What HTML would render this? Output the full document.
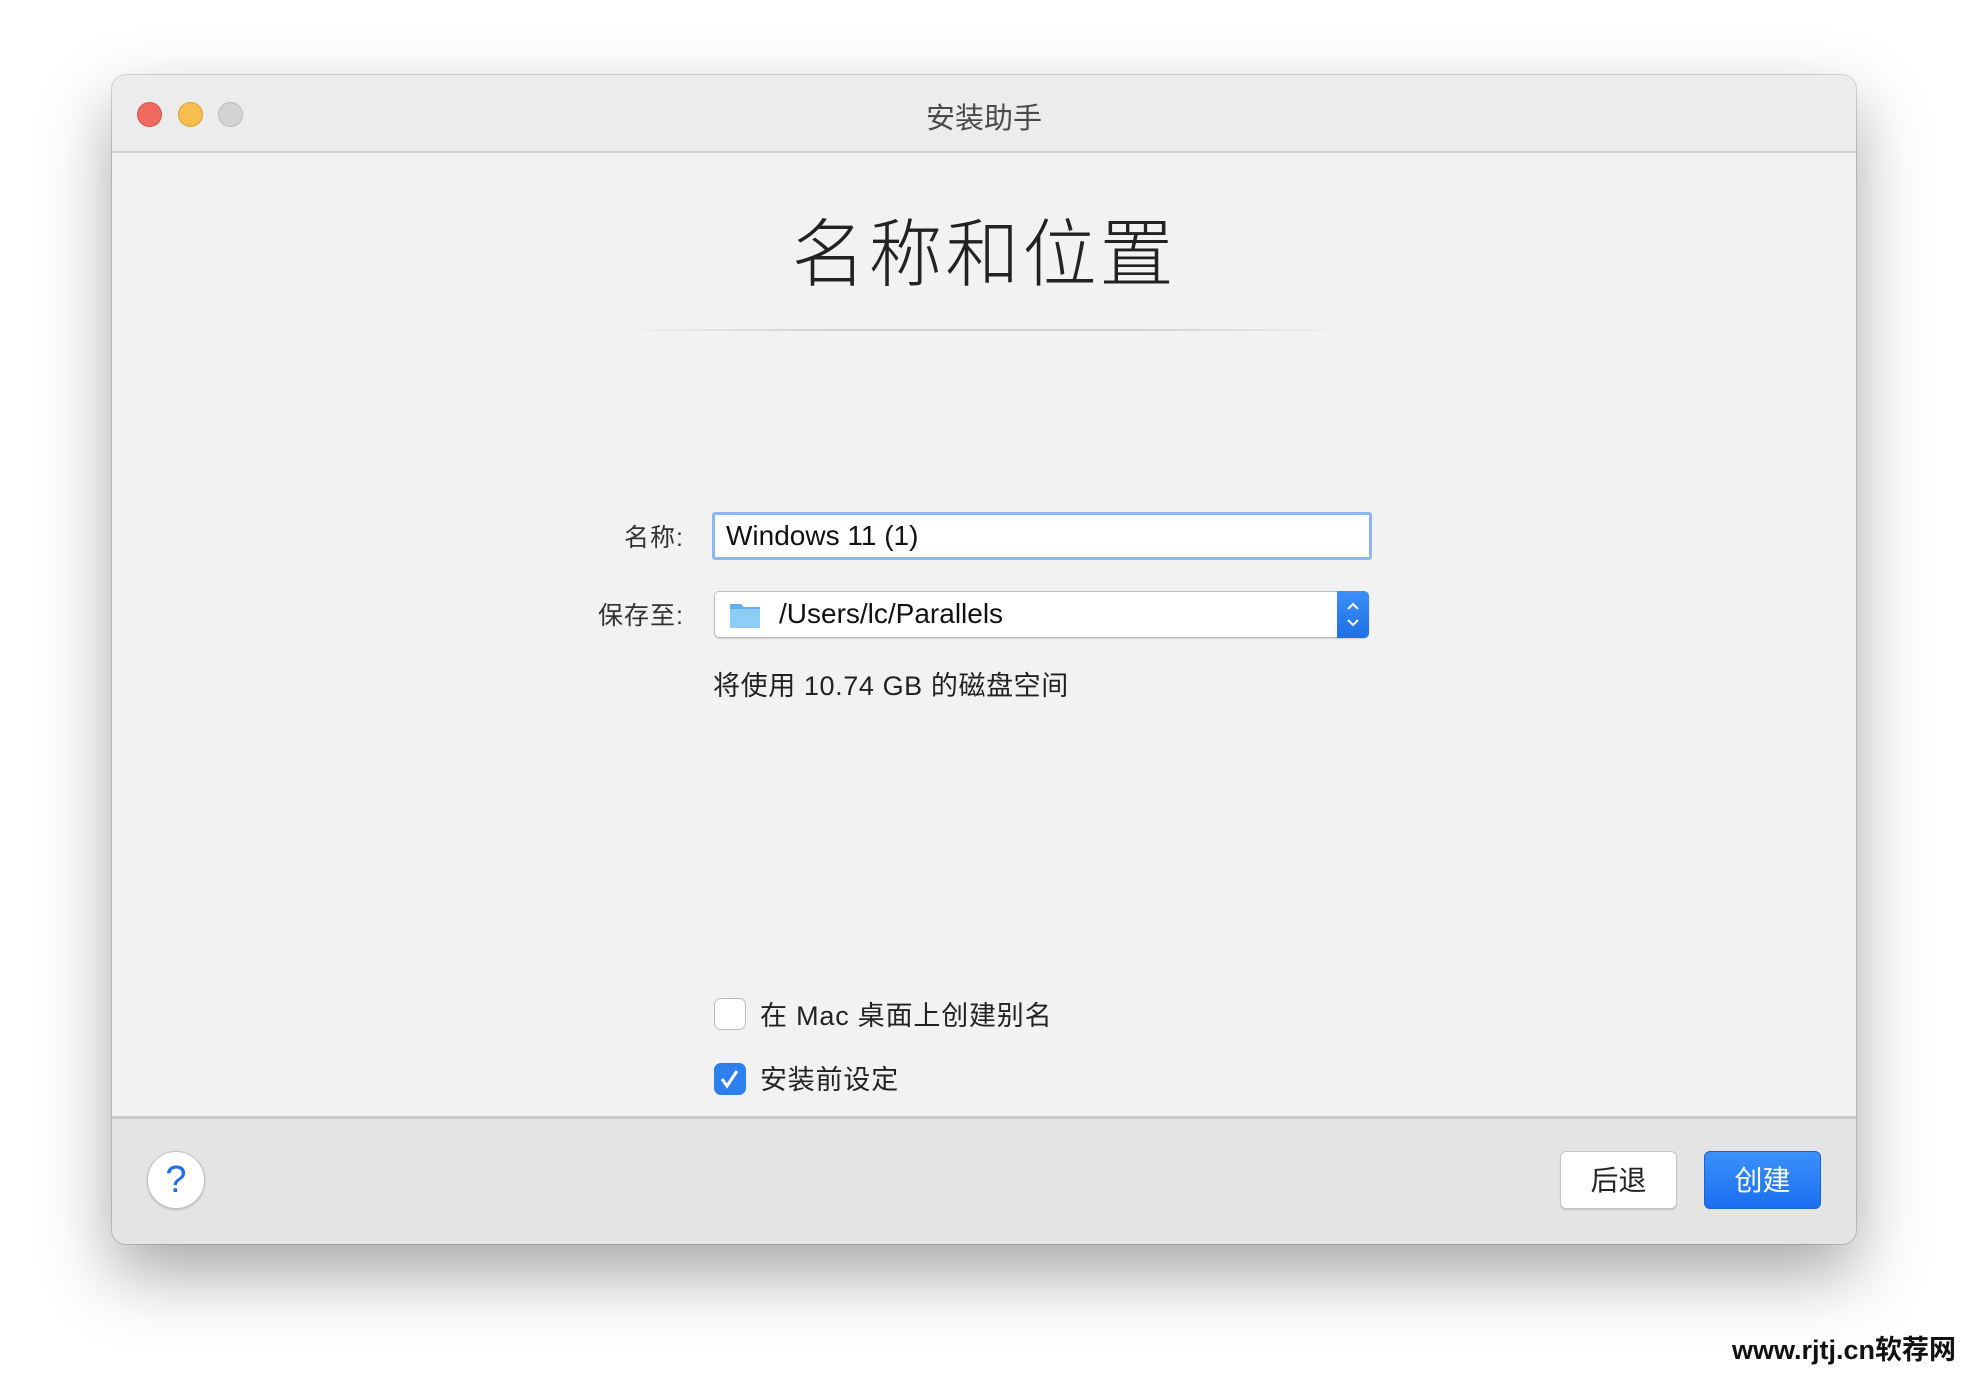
<!DOCTYPE html>
<html><head><meta charset="utf-8"><style>
*{margin:0;padding:0;box-sizing:border-box}
body{width:1968px;height:1392px;background:#fff;position:relative;overflow:hidden;font-family:"Liberation Sans","Noto Sans CJK SC",sans-serif;color:#222}
.win{position:absolute;left:112px;top:75px;width:1744px;height:1169px;border-radius:14px;background:#f2f2f2;box-shadow:0 30px 70px rgba(0,0,0,.35),0 0 0 1px rgba(0,0,0,.15);overflow:hidden}
.tb{position:absolute;left:0;top:0;width:100%;height:78px;background:#ececec;border-bottom:2px solid #d4d4d4}
.dot{position:absolute;top:27px;width:25px;height:25px;border-radius:50%}
.title{position:absolute;left:0;width:100%;top:20px;text-align:center;font-size:29px;color:#4a4a4a}
.abs{position:absolute}
.footer{position:absolute;left:0;top:1041px;width:100%;height:128px;background:#e4e4e4;border-top:3px solid #c9c9c9}
.cb{position:absolute;width:32px;height:32px;border-radius:7px}
.btn{position:absolute;top:32px;width:117px;height:58px;border-radius:6px;font-size:28px;text-align:center;line-height:58px}
</style></head><body>
<div class="win">
 <div class="tb">
  <div class="dot" style="left:25px;background:#ee6a5f;border:1px solid #d5544a"></div>
  <div class="dot" style="left:66px;background:#f5be4f;border:1px solid #d9a33a"></div>
  <div class="dot" style="left:106px;background:#d3d3d3;border:1px solid #bdbdbd"></div>
  <div class="title">安装助手</div>
 </div>
 <div class="abs" style="left:0;width:100%;top:120px;text-align:center;font-size:74px;color:#222;font-weight:300;letter-spacing:3px">名称和位置</div>
 <div class="abs" style="left:503px;top:254px;width:740px;height:2px;background:linear-gradient(90deg,rgba(200,200,200,0),#d0d0d0 30%,#d0d0d0 70%,rgba(200,200,200,0))"></div>
 <div class="abs" style="right:1172px;top:443px;font-size:25px;color:#333;letter-spacing:1px">名称:</div>
 <div class="abs" style="left:600px;top:437px;width:660px;height:48px;background:#fff;border:3px solid #8cb7f0;border-radius:3px;font-size:28px;line-height:42px;padding-left:11px;color:#111">Windows 11 (1)</div>
 <div class="abs" style="right:1172px;top:521px;font-size:25px;color:#333;letter-spacing:1px">保存至:</div>
 <div class="abs" style="left:602px;top:516px;width:655px;height:47px;background:#fff;border:1px solid #bcbcbc;border-radius:5px;box-shadow:0 1px 1px rgba(0,0,0,.15)">
  <svg class="abs" style="left:14px;top:8px" width="32" height="30" viewBox="0 0 32 30"><path d="M1 4h11l3 3h16v21H1z" fill="#5fb0ea"/><path d="M1 9h30v19H1z" fill="#8dcdf6"/></svg>
  <div class="abs" style="left:64px;top:6px;font-size:28px;color:#111">/Users/lc/Parallels</div>
  <div class="abs" style="right:-1px;top:-1px;width:32px;height:47px;background:linear-gradient(#3d8ff7,#1f6fe6);border-radius:0 5px 5px 0">
   <svg width="32" height="47" viewBox="0 0 32 47"><path d="M11 18l5-5 5 5M11 29l5 5 5-5" stroke="#fff" stroke-width="2" fill="none"/></svg>
  </div>
 </div>
 <div class="abs" style="left:601px;top:589px;font-size:27px;color:#222;letter-spacing:0.6px">将使用 10.74 GB 的磁盘空间</div>
 <div class="cb" style="left:602px;top:923px;background:#fff;border:1px solid #bcbcbc"></div>
 <div class="abs" style="left:648px;top:919px;font-size:27px;color:#222;letter-spacing:0.8px">在 Mac 桌面上创建别名</div>
 <div class="cb" style="left:602px;top:988px;background:#2f80ef">
  <svg width="32" height="32" viewBox="0 0 32 32"><path d="M8 16l5 7 10-15" stroke="#fff" stroke-width="3" fill="none"/></svg>
 </div>
 <div class="abs" style="left:648px;top:983px;font-size:27px;color:#222;letter-spacing:0.8px">安装前设定</div>
 <div class="footer">
  <div class="abs" style="left:35px;top:32px;width:58px;height:58px;border-radius:50%;background:#fff;border:1px solid #c4c4c4;box-shadow:0 1px 2px rgba(0,0,0,.2);text-align:center;line-height:56px;font-size:38px;color:#1a6ef0">?</div>
  <div class="btn" style="left:1448px;background:#fff;border:1px solid #c4c4c4;box-shadow:0 1px 1px rgba(0,0,0,.15);color:#222">后退</div>
  <div class="btn" style="left:1592px;background:linear-gradient(#3a92fb,#1a6ff0);color:#fff;border:1px solid #1a64d6">创建</div>
 </div>
</div>
<div class="abs" style="left:1732px;top:1328px;font-size:27px;font-weight:bold;color:#111">www.rjtj.cn软荐网</div>
</body></html>
